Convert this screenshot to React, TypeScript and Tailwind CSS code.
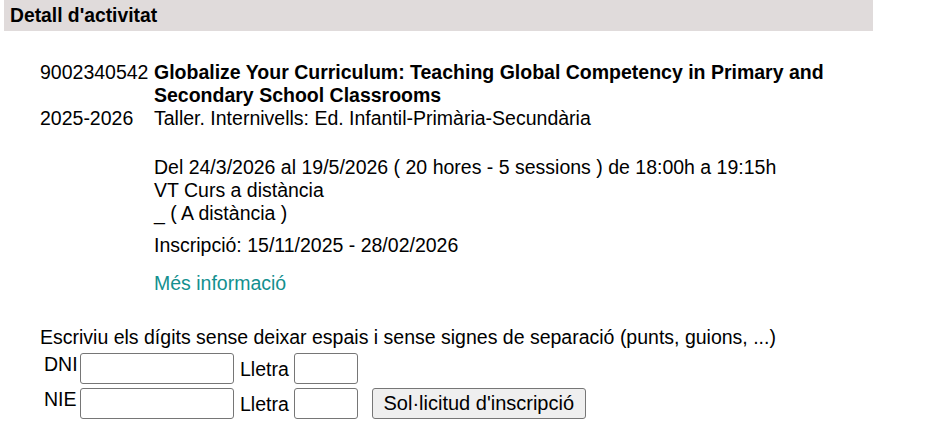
export default function App() {
  return (
    <div className="min-h-[436px] w-[928px] bg-white text-[19.5px] leading-[23px] text-black" style={{ fontFamily: '"Liberation Sans", Arial, sans-serif' }}>
      <div className="mx-[4px] flex h-[31px] w-[869px] items-center bg-[#e0dbdb] pl-[6px] text-[19.3px] font-bold">
        Detall d'activitat
      </div>

      <div className="ml-[40px] mt-[30px] grid grid-cols-[114px_690px]">
        <div>9002340542</div>
        <div className="font-bold">
          Globalize Your Curriculum: Teaching Global Competency in Primary and Secondary School Classrooms
        </div>
        <div>2025-2026</div>
        <div>Taller. Internivells: Ed. Infantil-Primària-Secundària</div>
        <div />
        <div className="pt-[26px]">
          <div>Del 24/3/2026 al 19/5/2026 ( 20 hores - 5 sessions ) de 18:00h a 19:15h</div>
          <div>VT Curs a distància</div>
          <div>_ ( A distància )</div>
          <div className="mt-[9px]">Inscripció: 15/11/2025 - 28/02/2026</div>
          <div className="mt-[15px]">
            <a href="#" className="text-[#13908f]">Més informació</a>
          </div>
        </div>
      </div>

      <div className="ml-[40px] mt-[31px]">
        <div>Escriviu els dígits sense deixar espais i sense signes de separació (punts, guions, ...)</div>
        <div className="mt-[4px] flex flex-col gap-[4px]">
          <div className="flex items-end">
            <span className="w-[40px] self-start pl-[4px]">DNI</span>
            <input className="h-[31px] w-[154px] rounded-[3px] border border-[#767676] px-1" />
            <span className="ml-[6px] pb-[3px]">Lletra</span>
            <input className="ml-[5px] h-[31px] w-[64px] rounded-[3px] border border-[#767676] px-1" />
          </div>
          <div className="flex items-end">
            <span className="w-[40px] self-start pl-[4px]">NIE</span>
            <input className="h-[31px] w-[154px] rounded-[3px] border border-[#767676] px-1" />
            <span className="ml-[6px] pb-[3px]">Lletra</span>
            <input className="ml-[5px] h-[31px] w-[64px] rounded-[3px] border border-[#767676] px-1" />
            <button className="ml-[14px] h-[31px] w-[214px] rounded-[3px] border border-[#767676] bg-[#efefef] text-[20px]">
              Sol·licitud d'inscripció
            </button>
          </div>
        </div>
      </div>
    </div>
  );
}
